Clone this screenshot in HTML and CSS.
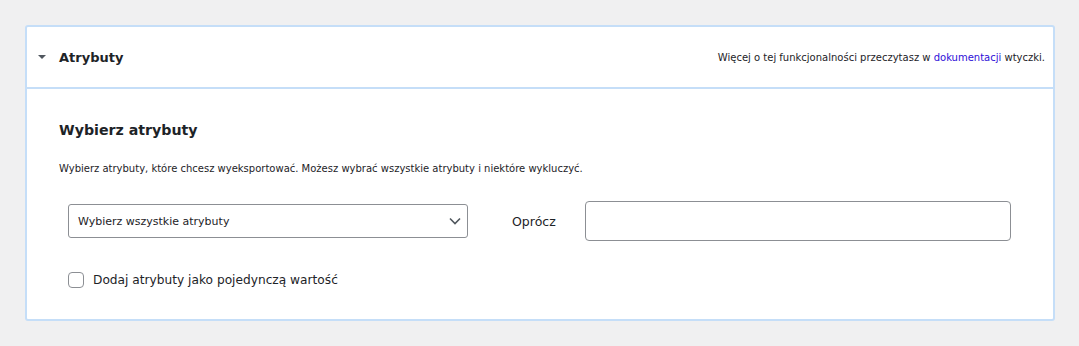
FILE: index.html
```html
<!DOCTYPE html>
<html lang="pl">
<head>
    <meta charset="UTF-8">
    <title>Atrybuty</title>
    <link rel="stylesheet" href="styles.css">
</head>
<body>
    <div class="panel">
        <div class="panel-head">
            <div class="panel-title">
                <span class="toggle"></span>
                <h2>Atrybuty</h2>
            </div>
            <p class="panel-info">Więcej o tej funkcjonalności przeczytasz w <a href="#">dokumentacji</a> wtyczki.</p>
        </div>
        <div class="panel-body">
            <h3>Wybierz atrybuty</h3>
            <p class="desc">Wybierz atrybuty, które chcesz wyeksportować. Możesz wybrać wszystkie atrybuty i niektóre wykluczyć.</p>
            <div class="fields">
                <div class="select">
                    <span>Wybierz wszystkie atrybuty</span>
                    <svg width="12" height="8" viewBox="0 0 12 8"><path d="M1 1.5l5 5 5-5" fill="none" stroke="#50575e" stroke-width="1.6"/></svg>
                </div>
                <label class="except-label">Oprócz</label>
                <div class="except-input"></div>
            </div>
            <label class="check">
                <span class="box"></span>
                Dodaj atrybuty jako pojedynczą wartość
            </label>
        </div>
    </div>
</body>
</html>
```

FILE: styles.css
```css
body {
    margin: 0;
    padding: 25px 25px 0 25px;
    background-color: #f0f0f1;
    font-family: "DejaVu Sans", Verdana, sans-serif;
    color: #1d2327;
}

.panel {
    width: 1030px;
    background-color: #ffffff;
    border: 2px solid #c5def8;
    border-radius: 3px;
    box-sizing: border-box;
}

.panel-head {
    height: 60px;
    display: flex;
    justify-content: space-between;
    align-items: center;
    padding: 0 8px 0 11px;
    border-bottom: 2px solid #c5def8;
}

.panel-title {
    display: flex;
    align-items: center;
}

.toggle {
    width: 0;
    height: 0;
    border-left: 4px solid transparent;
    border-right: 4px solid transparent;
    border-top: 4px solid #50575e;
    margin-right: 13px;
}

.panel-title h2 {
    margin: 0;
    font-size: 13px;
    font-weight: bold;
}

.panel-info {
    margin: 0;
    font-size: 10px;
}

.panel-info a {
    color: #2e0fd8;
    text-decoration: none;
}

.panel-body {
    padding: 33px 32px 31px 32px;
}

.panel-body h3 {
    margin: 0;
    font-size: 14.2px;
    font-weight: bold;
}

.desc {
    margin: 25px 0 0 0;
    font-size: 10px;
}

.fields {
    display: flex;
    align-items: center;
    margin-top: 27px;
    padding-left: 9px;
}

.select {
    width: 400px;
    height: 34px;
    box-sizing: border-box;
    border: 1px solid #8c8f94;
    border-radius: 3px;
    display: flex;
    justify-content: space-between;
    align-items: center;
    padding: 0 6px 0 9px;
    font-size: 11px;
}

.except-label {
    margin-left: 44px;
    font-size: 12.5px;
}

.except-input {
    width: 426px;
    height: 40px;
    box-sizing: border-box;
    border: 1px solid #8c8f94;
    border-radius: 4px;
    margin-left: 29px;
}

.check {
    display: flex;
    align-items: center;
    margin-top: 31px;
    padding-left: 9px;
    font-size: 12.2px;
}

.box {
    width: 16px;
    height: 16px;
    box-sizing: border-box;
    border: 1px solid #8c8f94;
    border-radius: 4px;
    margin-right: 9px;
}
```
